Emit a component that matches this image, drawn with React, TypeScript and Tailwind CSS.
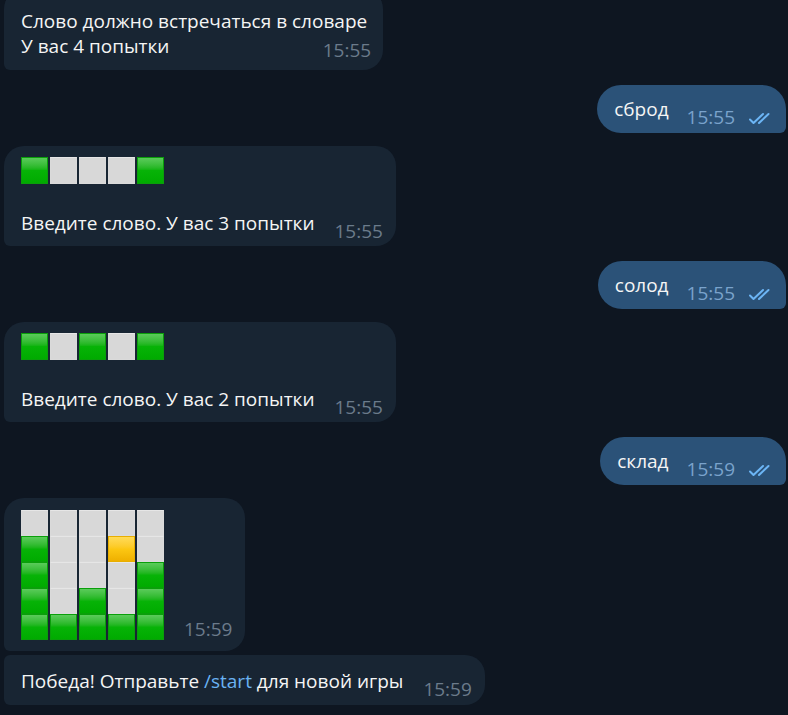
import React from "react";

type Cell = "g" | "w" | "y";

function Square({ kind, size = "h-[27px]" }: { kind: Cell; size?: string }) {
  const base = `w-[27px] ${size} border`;
  if (kind === "g")
    return <div className={`${base} border-[#0a9f0a] bg-gradient-to-b from-[#5acb5a] via-[#07b307] to-[#00ab00]`} />;
  if (kind === "y")
    return <div className={`${base} border-[#e8ae00] bg-gradient-to-b from-[#ffdb55] via-[#fcc712] to-[#efb000]`} />;
  return <div className={`${base} border-[#dadada] border-t-[#e6e6e6] bg-[#d8d8d8]`} />;
}

function Row({ cells }: { cells: Cell[] }) {
  return (
    <div className="flex gap-[2px]">
      {cells.map((c, i) => (
        <Square key={i} kind={c} />
      ))}
    </div>
  );
}

function Checks() {
  return (
    <svg width="28" height="14" viewBox="0 0 28 14" fill="none" stroke="#6cb5f5" strokeWidth="2" strokeLinecap="round" strokeLinejoin="round">
      <path d="M2 8.5 L5.5 12 L15 3" />
      <path d="M11 12 L20.5 3" />
    </svg>
  );
}

function Time({ t, out }: { t: string; out?: boolean }) {
  return <span className={`text-[19px] leading-5 ${out ? "text-[#7aa3cc]" : "text-[#6b7b8b]"}`}>{t}</span>;
}

function Outgoing({ text, time }: { text: string; time: string }) {
  return (
    <div className="self-end flex items-end rounded-[24px] rounded-br-[6px] bg-[#2b5278] pl-[17px] pr-[10px] pt-[12px] pb-[6px] mr-[2px]">
      <span className="leading-[25px] mb-[5px] mr-[18px]">{text}</span>
      <Time t={time} out />
      <span className="ml-[13px] mb-[2px]">
        <Checks />
      </span>
    </div>
  );
}

// columns of the final board, top to bottom
const grid: Cell[][] = [
  ["w", "g", "g", "g", "g"],
  ["w", "w", "w", "w", "g"],
  ["w", "w", "w", "g", "g"],
  ["w", "y", "w", "w", "g"],
  ["w", "w", "g", "g", "g"],
];

export default function App() {
  return (
    <div className="w-[788px] h-[715px] overflow-hidden bg-[#0e1621] text-[19px] text-[#f5f5f5] font-['Open_Sans',sans-serif] flex flex-col">
      {/* first message, cut by the top edge */}
      <div className="self-start ml-[4px] -mt-[11px] rounded-[20px] rounded-bl-[6px] bg-[#182533] pl-[17px] pr-[12px] pt-[20px] pb-[6px] grid">
        <div className="col-start-1 row-start-1 leading-[25px] pr-[4px] mb-[5px]">
          Слово должно встречаться в словаре
          <br />
          У вас 4 попытки
        </div>
        <div className="col-start-1 row-start-1 self-end justify-self-end">
          <Time t="15:55" />
        </div>
      </div>

      <div className="mt-[15px] flex flex-col">
        <Outgoing text="сброд" time="15:55" />
      </div>

      <div className="mt-[13px] self-start ml-[4px] rounded-[20px] rounded-bl-[6px] bg-[#182533] pl-[17px] pr-[13px] pt-[11px] pb-[5px]">
        <Row cells={["g", "w", "w", "w", "g"]} />
        <div className="flex items-end mt-[27px]">
          <span className="leading-[25px] mb-[5px] mr-[20px]">Введите слово. У вас 3 попытки</span>
          <Time t="15:55" />
        </div>
      </div>

      <div className="mt-[15px] flex flex-col">
        <Outgoing text="солод" time="15:55" />
      </div>

      <div className="mt-[13px] self-start ml-[4px] rounded-[20px] rounded-bl-[6px] bg-[#182533] pl-[17px] pr-[13px] pt-[11px] pb-[5px]">
        <Row cells={["g", "w", "g", "w", "g"]} />
        <div className="flex items-end mt-[27px]">
          <span className="leading-[25px] mb-[5px] mr-[20px]">Введите слово. У вас 2 попытки</span>
          <Time t="15:55" />
        </div>
      </div>

      <div className="mt-[15px] flex flex-col">
        <Outgoing text="склад" time="15:59" />
      </div>

      <div className="mt-[13px] self-start ml-[4px] rounded-[20px] rounded-bl-[6px] bg-[#182533] pl-[17px] pr-[13px] pt-[12px] pb-[8px] flex items-end">
        <div className="flex gap-[2px] mb-[3px]">
          {grid.map((col, i) => (
            <div key={i} className="flex flex-col">
              {col.map((c, j) => (
                <Square key={j} kind={c} size="h-[26px]" />
              ))}
            </div>
          ))}
        </div>
        <div className="ml-[20px]">
          <Time t="15:59" />
        </div>
      </div>

      <div className="mt-[4px] self-start ml-[4px] rounded-[20px] rounded-l-[6px] bg-[#182533] pl-[17px] pr-[13px] pt-[14px] pb-[6px] flex items-end">
        <span className="leading-[25px] mb-[5px] mr-[20px]">
          Победа! Отправьте <span className="text-[#6ab2f2]">/start</span> для новой игры
        </span>
        <Time t="15:59" />
      </div>
    </div>
  );
}
